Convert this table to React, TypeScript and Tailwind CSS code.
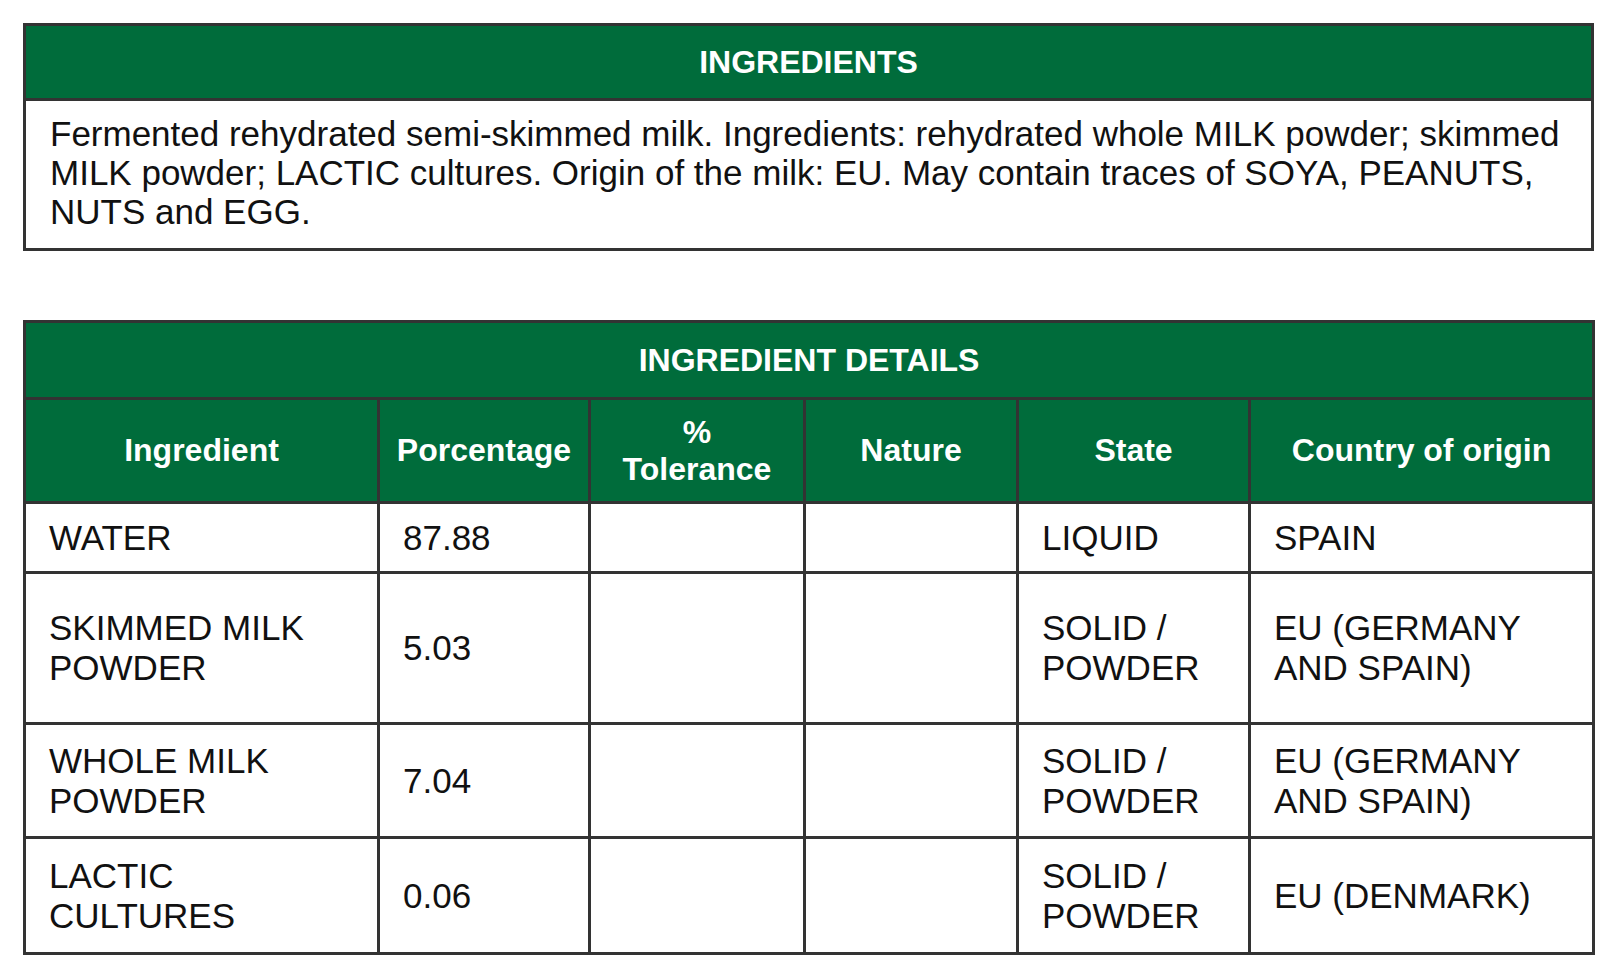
import React from 'react'

interface Row {
  ingredient: React.ReactNode
  percentage: string
  tolerance: string
  nature: string
  state: React.ReactNode
  origin: React.ReactNode
  height: string
}

const rows: Row[] = [
  {
    ingredient: 'WATER',
    percentage: '87.88',
    tolerance: '',
    nature: '',
    state: 'LIQUID',
    origin: 'SPAIN',
    height: 'h-[70px]',
  },
  {
    ingredient: (
      <>
        SKIMMED MILK
        <br />
        POWDER
      </>
    ),
    percentage: '5.03',
    tolerance: '',
    nature: '',
    state: (
      <>
        SOLID /
        <br />
        POWDER
      </>
    ),
    origin: (
      <>
        EU (GERMANY
        <br />
        AND SPAIN)
      </>
    ),
    height: 'h-[151px]',
  },
  {
    ingredient: (
      <>
        WHOLE MILK
        <br />
        POWDER
      </>
    ),
    percentage: '7.04',
    tolerance: '',
    nature: '',
    state: (
      <>
        SOLID /
        <br />
        POWDER
      </>
    ),
    origin: (
      <>
        EU (GERMANY
        <br />
        AND SPAIN)
      </>
    ),
    height: 'h-[114px]',
  },
  {
    ingredient: (
      <>
        LACTIC
        <br />
        CULTURES
      </>
    ),
    percentage: '0.06',
    tolerance: '',
    nature: '',
    state: (
      <>
        SOLID /
        <br />
        POWDER
      </>
    ),
    origin: 'EU (DENMARK)',
    height: 'h-[116px]',
  },
]

const headers: React.ReactNode[] = [
  'Ingredient',
  'Porcentage',
  <>
    %
    <br />
    Tolerance
  </>,
  'Nature',
  'State',
  'Country of origin',
]

const th = 'border-[3px] border-[#333333] px-3 text-center align-middle font-bold text-white'
const td = 'border-[3px] border-[#333333] pl-[23px] pr-3 text-left align-middle'

export default function App() {
  return (
    <div
      className="min-h-screen bg-white pl-[23px] pt-[23px] text-[#111111]"
      style={{ fontFamily: '"Liberation Sans", Arial, sans-serif' }}
    >
      {/* Ingredients statement */}
      <section className="w-[1571px] border-[3px] border-[#333333]">
        <h2 className="flex h-[75px] items-center justify-center border-b-[3px] border-[#333333] bg-[#006c3b] text-[32px] font-bold text-white">
          INGREDIENTS
        </h2>
        <p className="pb-[17px] pl-[24px] pr-4 pt-[13px] text-[35px] leading-[39px]">
          Fermented rehydrated semi-skimmed milk. Ingredients: rehydrated whole MILK powder; skimmed
          <br />
          MILK powder; LACTIC cultures. Origin of the milk: EU. May contain traces of SOYA, PEANUTS,
          <br />
          NUTS and EGG.
        </p>
      </section>

      {/* Ingredient details table */}
      <table className="mt-[69px] w-[1569px] table-fixed border-collapse text-[35px] leading-[40px]">
        <colgroup>
          <col className="w-[354px]" />
          <col className="w-[211px]" />
          <col className="w-[215px]" />
          <col className="w-[213px]" />
          <col className="w-[232px]" />
          <col className="w-[344px]" />
        </colgroup>
        <thead>
          <tr className="h-[77px] bg-[#006c3b]">
            <th colSpan={6} className={`${th} text-[32px]`}>
              INGREDIENT DETAILS
            </th>
          </tr>
          <tr className="h-[104px] bg-[#006c3b]">
            {headers.map((h, i) => (
              <th key={i} className={`${th} text-[32px] leading-[37px]`}>
                {h}
              </th>
            ))}
          </tr>
        </thead>
        <tbody>
          {rows.map((r, i) => (
            <tr key={i} className={r.height}>
              <td className={td}>{r.ingredient}</td>
              <td className={td}>{r.percentage}</td>
              <td className={td}>{r.tolerance}</td>
              <td className={td}>{r.nature}</td>
              <td className={td}>{r.state}</td>
              <td className={td}>{r.origin}</td>
            </tr>
          ))}
        </tbody>
      </table>
    </div>
  )
}
